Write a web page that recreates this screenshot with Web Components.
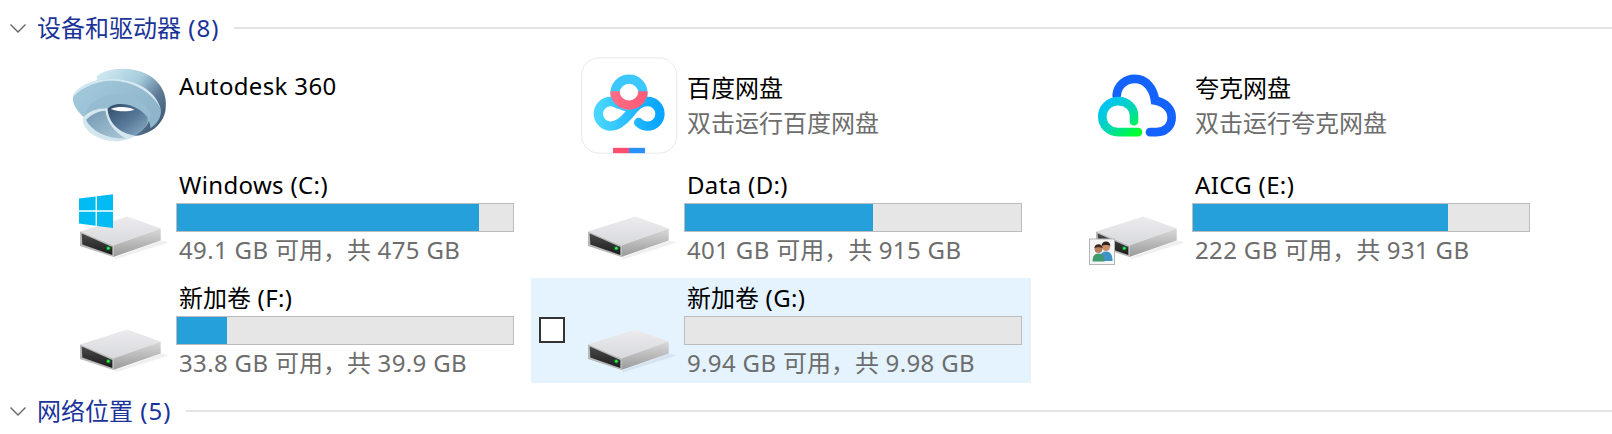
<!DOCTYPE html>
<html lang="zh">
<head>
<meta charset="utf-8">
<title>此电脑</title>
<style>
    html, body { margin: 0; background: #fff; overflow: hidden; }
    body { font-family: "Noto Sans", "Noto Sans CJK SC", sans-serif; }
</style>
</head>
<body>
<explorer-group label="设备和驱动器 (8)">
    <explorer-tile name="Autodesk 360"><app-icon kind="autodesk"></app-icon></explorer-tile>
    <explorer-tile name="百度网盘" sub="双击运行百度网盘"><app-icon kind="baidu"></app-icon></explorer-tile>
    <explorer-tile name="夸克网盘" sub="双击运行夸克网盘"><app-icon kind="quark"></app-icon></explorer-tile>
    <explorer-tile name="Windows (C:)" sub="49.1 GB 可用，共 475 GB" used="90"><app-icon kind="drive" badge="windows"></app-icon></explorer-tile>
    <explorer-tile name="Data (D:)" sub="401 GB 可用，共 915 GB" used="56"><app-icon kind="drive"></app-icon></explorer-tile>
    <explorer-tile name="AICG (E:)" sub="222 GB 可用，共 931 GB" used="76"><app-icon kind="drive" badge="share"></app-icon></explorer-tile>
    <explorer-tile name="新加卷 (F:)" sub="33.8 GB 可用，共 39.9 GB" used="15"><app-icon kind="drive"></app-icon></explorer-tile>
    <explorer-tile name="新加卷 (G:)" sub="9.94 GB 可用，共 9.98 GB" used="0" hovered><app-icon kind="drive"></app-icon></explorer-tile>
</explorer-group>
<explorer-group label="网络位置 (5)"></explorer-group>

<script>
const ICONS = {
    autodesk: `
        <defs>
            <linearGradient id="a1" x1="0" y1="0" x2="1" y2=".8">
                <stop offset="0" stop-color="#d6edf3"/><stop offset=".45" stop-color="#a6cddd"/><stop offset=".72" stop-color="#5f7b97"/><stop offset="1" stop-color="#3d5672"/>
            </linearGradient>
            <linearGradient id="a2" x1="0" y1="0" x2="1" y2=".5">
                <stop offset="0" stop-color="#a4cbdd"/><stop offset="1" stop-color="#8fb5cb"/>
            </linearGradient>
            <linearGradient id="a3" x1="0" y1="0" x2="1" y2="1">
                <stop offset="0" stop-color="#2f4a68"/><stop offset=".55" stop-color="#587a9a"/><stop offset="1" stop-color="#8fafc8"/>
            </linearGradient>
            <linearGradient id="a4" x1="0" y1="0" x2="1" y2="1">
                <stop offset="0" stop-color="#7398b3"/><stop offset="1" stop-color="#a9c6d6"/>
            </linearGradient>
        </defs>
        <g transform="translate(-10.4 3.5) scale(.345 .33)">
            <path d="M98 48C125 22 195 16 242 40C285 62 306 105 298 152C290 197 250 226 205 229C170 231 135 210 128 170Z" fill="url(#a1)"/>
            <path d="M30 112C36 80 95 52 155 56C215 60 268 92 284 145C290 170 272 195 255 205C250 150 200 120 150 120C110 120 85 140 62 172C45 155 28 135 30 112Z" fill="url(#a2)"/>
            <path d="M30 112C36 80 95 52 155 56C215 60 268 92 284 145C262 100 210 66 155 62C100 58 50 85 30 112Z" fill="#d5e8ef"/>
            <path d="M62 174C72 125 115 100 165 102C205 104 240 125 256 165C250 195 232 216 205 228C165 222 135 190 130 150C100 148 75 158 62 174Z" fill="#96bcd1"/>
            <path d="M130 146C150 122 212 126 246 172C250 195 232 216 208 227C165 222 132 190 130 146Z" fill="url(#a3)"/>
            <path d="M140 147C158 139 190 139 208 149C190 156 160 156 140 147Z" fill="#fff"/>
            <path d="M58 176C70 155 100 145 130 145C132 190 165 222 212 228C190 241 170 246 150 245C105 243 58 215 58 176Z" fill="#d4e7ee"/>
            <path d="M68 180C85 161 105 153 124 152C130 190 150 215 182 236C130 238 85 215 68 180Z" fill="url(#a4)"/>
        </g>`,
    baidu: `
        <defs>
            <linearGradient id="b1" x1="0" y1="0" x2="1" y2="0">
                <stop offset="0" stop-color="#48d6ff"/><stop offset="1" stop-color="#08a4ff"/>
            </linearGradient>
            <linearGradient id="b2" x1="0" y1="0" x2="1" y2="0">
                <stop offset="0" stop-color="#ff6a84"/><stop offset="1" stop-color="#ff5c78"/>
            </linearGradient>
        </defs>
        <g transform="translate(-21 -16.5) scale(.3333)" fill="none">
            <rect x="65" y="52" width="285" height="286" rx="52" fill="#fff" stroke="#e8e8e8" stroke-width="3"/>
            <path d="M159 322h48v16h-48z" fill="#ff4d70"/>
            <path d="M207 322h48v16h-48z" fill="#2a8fff"/>
            <circle cx="207" cy="158" r="42" stroke="#3cc8ff" stroke-width="28"/>
            <path d="M236 246C244 254 254 257 263 257A37 37 0 0 0 263 183C235 183 222 205 207 222C192 240 175 257 152 257A37 37 0 0 1 152 183C160 183 168 186 174 191" stroke="url(#b1)" stroke-width="28" stroke-linecap="round"/>
            <path d="M165 152A42 42 0 1 0 249 152" stroke="url(#b2)" stroke-width="28"/>
        </g>`,
    quark: `
        <defs>
            <linearGradient id="q1" x1="0" y1="0" x2="1" y2="1">
                <stop offset="0" stop-color="#00c0ff"/><stop offset=".55" stop-color="#00d8b0"/><stop offset="1" stop-color="#00ff30"/>
            </linearGradient>
        </defs>
        <g transform="translate(-19 -6.5) scale(.3333)" fill="none" stroke-width="26" stroke-linecap="round">
            <path d="M140 135C142 105 165 85 195 85C225 85 250 110 255 150C285 155 305 175 305 200C305 228 285 245 260 245L240 245" stroke="#1463ff"/>
            <path d="M192 212L192 195C192 170 170 152 145 152C118 152 97 172 97 198C97 225 118 245 145 245L204 245" stroke="url(#q1)"/>
        </g>`,
    drive: `
        <defs>
            <linearGradient id="d1" x1="0" y1="0" x2="0" y2="1">
                <stop offset="0" stop-color="#ececef"/><stop offset="1" stop-color="#d8d9dc"/>
            </linearGradient>
            <linearGradient id="d2" x1="0" y1="0" x2="0" y2="1">
                <stop offset="0" stop-color="#d9d9d9"/><stop offset="1" stop-color="#9a9a9a"/>
            </linearGradient>
            <linearGradient id="d3" x1="0" y1="0" x2="0" y2="1">
                <stop offset="0" stop-color="#4a4a4a"/><stop offset="1" stop-color="#1c1c1c"/>
            </linearGradient>
        </defs>
        <g transform="translate(0 -1.5)">
            <path d="M41 89L88 72L96 74L42 91Z" fill="#000" opacity=".06"/>
            <path d="M7 63L54.3 48L87.7 60L40.3 77Z" fill="url(#d1)"/>
            <path d="M40.3 77L87.7 60V72L40.3 88.5Z" fill="url(#d2)"/>
            <path d="M7 63L40.3 77V88.5L7 77.5Z" fill="#b9b9b9"/>
            <path d="M8.7 65L39.3 78.4V86.6L9.3 76Z" fill="url(#d3)"/>
            <circle cx="35.3" cy="79.8" r="2.4" fill="#0b5" opacity=".4"/>
            <circle cx="35.3" cy="79.8" r="1.3" fill="#2eff3a"/>
        </g>`,
    windows: `
        <g fill="#00bcf2">
            <path d="M6 28.5L22.6 26.4V40.3H6Z"/>
            <path d="M24 26.2L40 24.3V40.3H24Z"/>
            <path d="M6 41.7H22.6V55.8L6 53.6Z"/>
            <path d="M24 41.7H40V58L24 56Z"/>
        </g>`,
    share: `
        <rect x=".5" y="69" width="25" height="25.5" fill="#f6f6f6" stroke="#b5b5b5"/>
        <circle cx="17" cy="76.8" r="4.2" fill="#c98f6a"/>
        <path d="M12.6 76C12.8 72.5 15 71.6 17 71.6S21.2 72.5 21.4 76C19.5 74.6 15 74.6 12.6 76Z" fill="#33241b"/>
        <path d="M10.5 91C10.5 84 13 81.5 17 81.5S23.5 84 23.5 91Z" fill="#3f93c6"/>
        <circle cx="9.5" cy="79" r="3.9" fill="#b57f5c"/>
        <path d="M5.4 78.4C5.6 75 7.6 74.2 9.5 74.2S13.4 75 13.6 78.4C11.6 77 7.6 77 5.4 78.4Z" fill="#3b2a20"/>
        <path d="M3.5 91.5C3.5 85.5 6 83.4 9.5 83.4S15.5 85.5 15.5 91.5Z" fill="#3f9a72"/>`
};

// latin runs get a bit of tracking, Noto Sans sets tighter than the reference
const markLatin = (text) => text.replace(/[\x20-\x7e]+/g, (run) => `<span class="lat">${run}</span>`);

class AppIcon extends HTMLElement {
    connectedCallback() {
        const kind = this.getAttribute('kind');
        const badge = this.getAttribute('badge');
        this.attachShadow({ mode: 'open' });
        this.shadowRoot.innerHTML = `
            <style>
                :host { display: block; width: 96px; height: 96px; }
                svg { display: block; overflow: visible; }
            </style>
            <svg width="96" height="96" viewBox="0 0 96 96">
                ${ICONS[kind]}
                ${badge ? ICONS[badge] : ''}
            </svg>
        `;
    }
}

class ExplorerGroup extends HTMLElement {
    connectedCallback() {
        this.attachShadow({ mode: 'open' });
        this.shadowRoot.innerHTML = `
            <style>
                :host { display: block; }
                header {
                    box-sizing: border-box;
                    height: 52px;
                    padding: 4px 0 0 10px;
                    display: flex;
                    align-items: center;
                    color: #1a3399;
                    font-size: 24px;
                }
                svg { flex: none; margin-right: 11px; }
                .title { margin-bottom: 4px; white-space: nowrap; }
                .lat { letter-spacing: 1px; }
                .rule { flex: 1; height: 2px; background: #e3e3e3; margin-left: 15px; }
                .tiles {
                    display: grid;
                    grid-template-columns: repeat(3, 500px);
                    grid-auto-rows: 105px;
                    gap: 8px;
                    padding-left: 23px;
                }
            </style>
            <header>
                <svg width="16" height="9" viewBox="0 0 16 9"><path d="M.5 .5L8 8L15.5 .5" fill="none" stroke="#666" stroke-width="1.4"/></svg>
                <span class="title">${markLatin(this.getAttribute('label'))}</span>
                <div class="rule"></div>
            </header>
            <div class="tiles"><slot></slot></div>
        `;
    }
}

class ExplorerTile extends HTMLElement {
    connectedCallback() {
        const sub = this.getAttribute('sub') || '';
        const used = this.getAttribute('used');
        const hasBar = used !== null;
        this.attachShadow({ mode: 'open' });
        this.shadowRoot.innerHTML = `
            <style>
                :host {
                    display: flex;
                    align-items: center;
                    position: relative;
                    padding-left: 50px;
                    gap: 7px;
                    font-size: 24px;
                    line-height: 35px;
                }
                :host([hovered]) { background: #e5f3ff; }
                .check {
                    position: absolute;
                    left: 8px;
                    top: 39px;
                    box-sizing: border-box;
                    width: 26px;
                    height: 26px;
                    background: #fff;
                    border: 2px solid #333;
                }
                .info { width: 338px; }
                .info.has-bar { padding-bottom: 2px; }
                .name { color: #000; padding-left: 3px; white-space: nowrap; min-height: 35px; }
                .sub { color: #6d6d6d; padding-left: 3px; white-space: nowrap; min-height: 35px; }
                .sub:empty { min-height: 39px; }
                .lat { letter-spacing: .35px; }
                .bar {
                    box-sizing: border-box;
                    height: 29px;
                    margin-top: 1px;
                    background: #e6e6e6;
                    border: 1px solid #bcbcbc;
                }
                .fill { height: 100%; background: #26a0da; width: ${used || 0}%; }
            </style>
            ${this.hasAttribute('hovered') ? '<div class="check"></div>' : ''}
            <slot></slot>
            <div class="info ${hasBar ? 'has-bar' : ''}">
                <div class="name">${markLatin(this.getAttribute('name'))}</div>
                ${hasBar ? '<div class="bar"><div class="fill"></div></div>' : ''}
                <div class="sub">${markLatin(sub)}</div>
            </div>
        `;
    }
}

customElements.define('app-icon', AppIcon);
customElements.define('explorer-group', ExplorerGroup);
customElements.define('explorer-tile', ExplorerTile);
</script>
</body>
</html>
